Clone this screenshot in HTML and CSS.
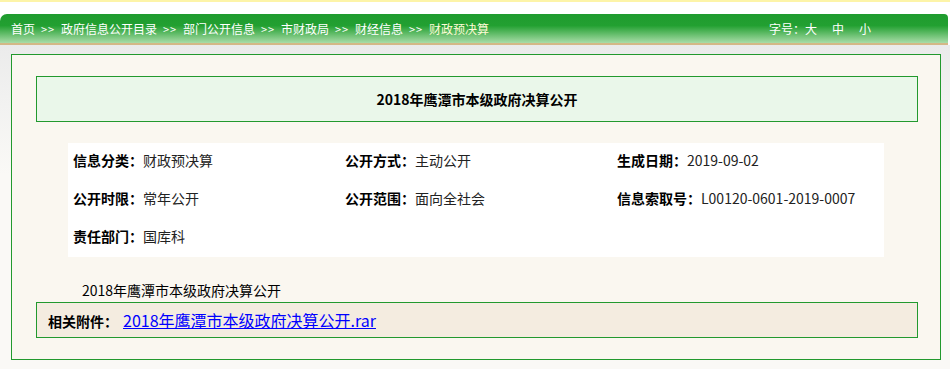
FILE: index.html
```html
<!DOCTYPE html>
<html lang="zh-CN">
  <head>
    <meta charset="UTF-8" />
    <meta name="viewport" content="width=device-width, initial-scale=1.0" />
    <title>2018年鹰潭市本级政府决算公开</title>
    <link rel="stylesheet" href="styles.css">
  </head>
  <body>
    <div class="top-strip"></div>

    <div class="nav-bar">
      <div class="crumbs">
        <a href="#">首页</a><span class="sep">&gt;&gt;</span><a href="#">政府信息公开目录</a><span class="sep">&gt;&gt;</span><a href="#">部门公开信息</a><span class="sep">&gt;&gt;</span><a href="#">市财政局</a><span class="sep">&gt;&gt;</span><a href="#">财经信息</a><span class="sep">&gt;&gt;</span><a href="#" class="current">财政预决算</a>
      </div>
      <div class="font-size">
        字号：<a href="#">大</a><a href="#">中</a><a href="#">小</a>
      </div>
    </div>

    <div class="page">
      <div class="content-box">
        <div class="title-box">
          <h1>2018年鹰潭市本级政府决算公开</h1>
        </div>

        <div class="info-table">
          <div class="info-cell"><b>信息分类：</b>财政预决算</div>
          <div class="info-cell"><b>公开方式：</b>主动公开</div>
          <div class="info-cell"><b>生成日期：</b>2019-09-02</div>
          <div class="info-cell"><b>公开时限：</b>常年公开</div>
          <div class="info-cell"><b>公开范围：</b>面向全社会</div>
          <div class="info-cell"><b>信息索取号：</b>L00120-0601-2019-0007</div>
          <div class="info-cell"><b>责任部门：</b>国库科</div>
        </div>

        <p class="body-text">2018年鹰潭市本级政府决算公开</p>

        <div class="attach-box">
          <b>相关附件：</b><a href="#">2018年鹰潭市本级政府决算公开.rar</a>
        </div>
      </div>
    </div>
  </body>
</html>
```

FILE: styles.css
```css
/* 全局 */
body {
  margin: 0;
  padding: 0;
  background-color: #ffffff;
  font-family: "Noto Sans CJK SC", "Noto Sans", sans-serif;
  color: #000;
}

a {
  text-decoration: none;
}

.top-strip {
  height: 2px;
  background-color: #fdf4a8;
  margin-bottom: 12px;
}

/* 导航条 */
.nav-bar {
  height: 29px;
  margin-right: 2px;
  display: flex;
  align-items: center;
  justify-content: space-between;
  padding: 0 77px 0 11px;
  background: linear-gradient(to bottom, #1f9b2e 0%, #22a031 40%, #a9dca8 100%);
  border-top-left-radius: 7px;
  border-top-right-radius: 4px;
  border-bottom: 2px solid #d4b887;
  font-size: 12px;
  line-height: 31px;
  color: #ffffff;
}

.crumbs a {
  color: #ffffff;
}

.crumbs a.current {
  color: #fffbd6;
}

.sep {
  display: inline-block;
  width: 26px;
  text-align: center;
  letter-spacing: 1px;
  font-size: 11px;
}

.font-size a {
  color: #ffffff;
  margin-right: 15px;
}

.font-size a:last-child {
  margin-right: 0;
}

/* 内容 */
.page {
  padding: 9px 0 9px 11px;
  background: linear-gradient(to bottom, #ebebeb 0px, #f2f2f1 60px, #faf9f6 130px);
}

.content-box {
  width: 928px;
  padding: 21px 0;
  background-color: #faf7f0;
  border: 1px solid #22992e;
}

.title-box {
  margin: 0 22px 0 24px;
  height: 44px;
  background-color: #eaf7ea;
  border: 1px solid #22992e;
}

.title-box h1 {
  margin: 0;
  font-size: 14px;
  line-height: 44px;
  text-align: center;
  font-weight: bold;
}

.info-table {
  width: 816px;
  margin: 21px auto 0;
  background-color: #ffffff;
  display: grid;
  grid-template-columns: repeat(3, 1fr);
  grid-auto-rows: 38px;
}

.info-cell {
  padding-left: 5px;
  font-size: 14px;
  line-height: 34px;
  color: #222;
}

.info-cell b {
  color: #000;
}

.body-text {
  margin: 22px 0 1px;
  padding-left: 70px;
  font-size: 14px;
  line-height: 22px;
}

.attach-box {
  margin: 0 22px 0 24px;
  height: 34px;
  padding-left: 11px;
  background-color: #f4ece0;
  border: 1px solid #22992e;
  font-size: 14px;
  line-height: 34px;
}

.attach-box a {
  margin-left: 5px;
  font-size: 16px;
  color: #0000ff;
  text-decoration: underline;
}
```
